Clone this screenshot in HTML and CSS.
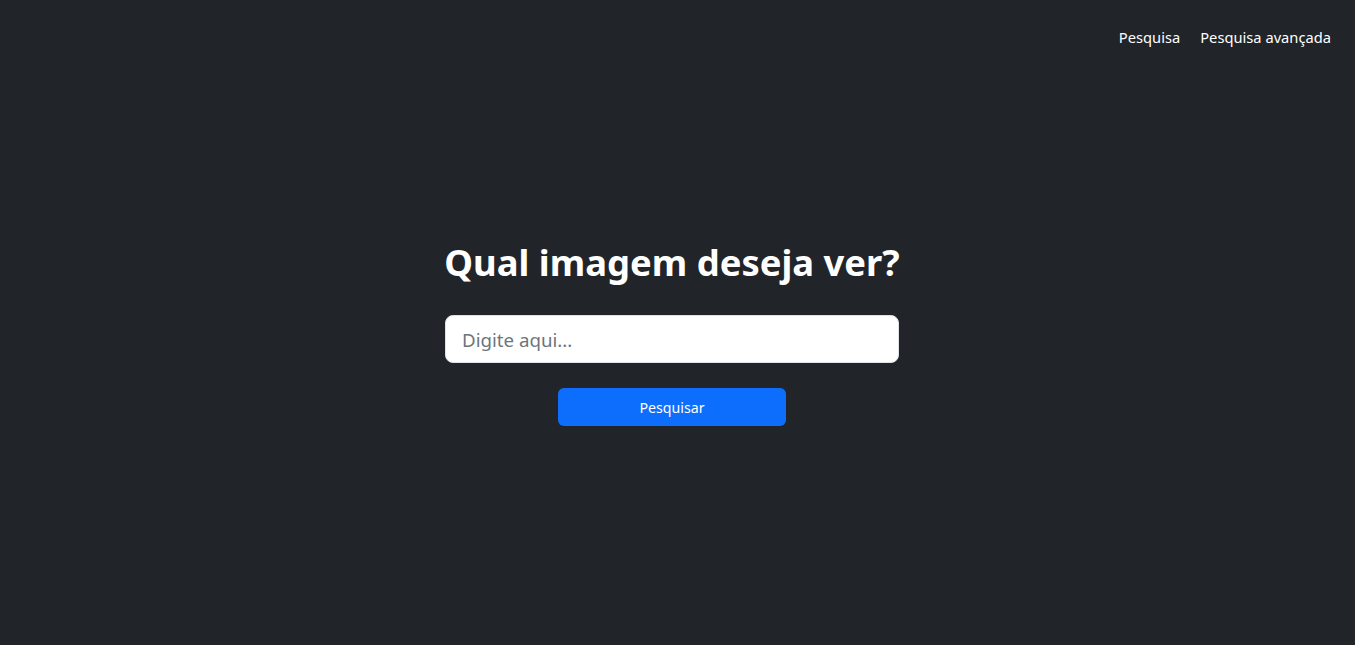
FILE: index.html
```html
<!DOCTYPE html>
<html lang="pt">
<head>
<meta charset="utf-8">
<title>Pesquisa</title>
<link rel="stylesheet" href="styles.css">
</head>
<body>
<nav class="topnav">
  <a class="nav-link" href="#">Pesquisa</a>
  <a class="nav-link" href="#">Pesquisa avançada</a>
</nav>
<main class="hero">
  <h1 class="title">Qual imagem deseja ver?</h1>
  <form class="search">
    <input class="search-input" type="text" placeholder="Digite aqui...">
    <button class="search-btn" type="button">Pesquisar</button>
  </form>
</main>
</body>
</html>
```

FILE: styles.css
```css
html, body {
  margin: 0;
  padding: 0;
}
body {
  background: #212529;
  color: #fff;
  font-family: "Noto Sans", "Open Sans", sans-serif;
  min-height: 100vh;
  display: flex;
  flex-direction: column;
}
.topnav {
  display: flex;
  justify-content: flex-end;
  gap: 4px;
  padding: 25px 16px 0 0;
  height: 49px;
  box-sizing: content-box;
}
.nav-link {
  color: #fff;
  text-decoration: none;
  font-size: 14.7px;
  line-height: 24px;
  padding: 0 8px;
}
.hero {
  display: flex;
  flex-direction: column;
  align-items: center;
  padding-top: 164px;
  padding-right: 11px;
}
.title {
  margin: 0 0 29px;
  font-size: 36.4px;
  line-height: 48px;
  font-weight: 700;
}
.search {
  display: flex;
  flex-direction: column;
  align-items: center;
  gap: 25px;
}
.search-input {
  box-sizing: border-box;
  width: 454px;
  height: 48px;
  padding: 0 16px;
  border: 1px solid #dee2e6;
  border-radius: 8px;
  background: #fff;
  font-family: inherit;
  font-size: 18.7px;
  color: #212529;
  outline: none;
}
.search-input::placeholder {
  color: #6c757d;
}
.search-btn {
  width: 228px;
  height: 38px;
  border: none;
  border-radius: 6px;
  background: #0d6efd;
  color: #fff;
  font-family: inherit;
  font-size: 14.2px;
  cursor: pointer;
}
```
